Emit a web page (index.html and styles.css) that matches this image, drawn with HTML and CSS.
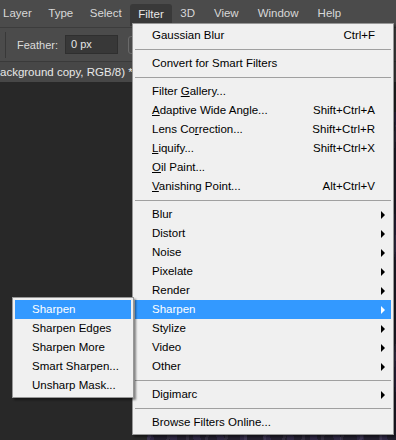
FILE: index.html
```html
<!DOCTYPE html>
<html lang="en">

<head>
  <meta charset="UTF-8">
  <meta name="viewport" content="width=device-width, initial-scale=1.0">
  <title>Filter Menu</title>
  <link rel="stylesheet" href="styles.css">
</head>

<body>
  <div class="app">
    <div class="menubar">
      <div class="menubar-item first">Layer</div>
      <div class="menubar-item">Type</div>
      <div class="menubar-item">Select</div>
      <div class="menubar-item active">Filter</div>
      <div class="menubar-item">3D</div>
      <div class="menubar-item spaced">View</div>
      <div class="menubar-item spaced">Window</div>
      <div class="menubar-item spaced">Help</div>
    </div>

    <div class="options-bar">
      <div class="divider"></div>
      <span class="option-label">Feather:</span>
      <div class="option-input">0 px</div>
      <div class="option-check"></div>
    </div>

    <div class="tab-row">
      <span class="tab-title">ackground copy, RGB/8) *</span>
    </div>

    <div class="workspace">
      <div class="document"></div>
    </div>

    <div class="dropdown">
      <div class="menu-item"><span class="label">Gaussian Blur</span><span class="shortcut">Ctrl+F</span><span class="arrow-col"></span></div>
      <div class="separator"></div>
      <div class="menu-item"><span class="label">Convert for Smart Filters</span><span class="arrow-col"></span></div>
      <div class="separator"></div>
      <div class="menu-item"><span class="label">Filter <u>G</u>allery...</span><span class="arrow-col"></span></div>
      <div class="menu-item"><span class="label"><u>A</u>daptive Wide Angle...</span><span class="shortcut">Shift+Ctrl+A</span><span class="arrow-col"></span></div>
      <div class="menu-item"><span class="label">Lens Co<u>r</u>rection...</span><span class="shortcut">Shift+Ctrl+R</span><span class="arrow-col"></span></div>
      <div class="menu-item"><span class="label"><u>L</u>iquify...</span><span class="shortcut">Shift+Ctrl+X</span><span class="arrow-col"></span></div>
      <div class="menu-item"><span class="label"><u>O</u>il Paint...</span><span class="arrow-col"></span></div>
      <div class="menu-item"><span class="label"><u>V</u>anishing Point...</span><span class="shortcut">Alt+Ctrl+V</span><span class="arrow-col"></span></div>
      <div class="separator"></div>
      <div class="menu-item"><span class="label">Blur</span><span class="arrow-col"><i class="arrow"></i></span></div>
      <div class="menu-item"><span class="label">Distort</span><span class="arrow-col"><i class="arrow"></i></span></div>
      <div class="menu-item"><span class="label">Noise</span><span class="arrow-col"><i class="arrow"></i></span></div>
      <div class="menu-item"><span class="label">Pixelate</span><span class="arrow-col"><i class="arrow"></i></span></div>
      <div class="menu-item"><span class="label">Render</span><span class="arrow-col"><i class="arrow"></i></span></div>
      <div class="menu-item selected"><span class="label">Sharpen</span><span class="arrow-col"><i class="arrow"></i></span></div>
      <div class="menu-item"><span class="label">Stylize</span><span class="arrow-col"><i class="arrow"></i></span></div>
      <div class="menu-item"><span class="label">Video</span><span class="arrow-col"><i class="arrow"></i></span></div>
      <div class="menu-item"><span class="label">Other</span><span class="arrow-col"><i class="arrow"></i></span></div>
      <div class="separator"></div>
      <div class="menu-item"><span class="label">Digimarc</span><span class="arrow-col"><i class="arrow"></i></span></div>
      <div class="separator"></div>
      <div class="menu-item"><span class="label">Browse Filters Online...</span><span class="arrow-col"></span></div>
    </div>

    <div class="submenu">
      <div class="menu-item selected"><span class="label">Sharpen</span></div>
      <div class="menu-item"><span class="label">Sharpen Edges</span></div>
      <div class="menu-item"><span class="label">Sharpen More</span></div>
      <div class="menu-item"><span class="label">Smart Sharpen...</span></div>
      <div class="menu-item"><span class="label">Unsharp Mask...</span></div>
    </div>
  </div>
</body>

</html>
```

FILE: styles.css
```css
body {
  margin: 0;
  padding: 0;
  background-color: #282828;
  font-family: "Liberation Sans", Arial, sans-serif;
}

.app {
  position: relative;
  width: 396px;
  height: 440px;
  overflow: hidden;
  display: flex;
  flex-direction: column;
}

/* top application menu */
.menubar {
  height: 27px;
  background-color: #4b4b4b;
  border-bottom: 1px solid #3c3c3c;
  display: flex;
  align-items: center;
  font-size: 11.5px;
  color: #d8d8d8;
}

.menubar-item {
  height: 19px;
  line-height: 19px;
  padding: 0 8px;
  margin-right: 0.5px;
  border-radius: 2px;
}

.menubar-item.first {
  margin-left: -5px;
}

.menubar-item.spaced {
  margin-left: 2.5px;
}

.menubar-item.active {
  background-color: #393939;
  color: #e8e8e8;
  height: 22px;
  line-height: 20px;
  margin-top: 3px;
  border-radius: 3px 3px 0 0;
}

/* tool options */
.options-bar {
  height: 33px;
  background-color: #4b4b4b;
  border-bottom: 1px solid #3a3a3a;
  display: flex;
  align-items: center;
  font-size: 11px;
  color: #dcdcdc;
}

.divider {
  width: 1px;
  height: 26px;
  margin-left: 5px;
  background-color: #383838;
}

.option-label {
  margin-left: 11px;
}

.option-input {
  width: 46px;
  height: 17px;
  line-height: 17px;
  margin-left: 7px;
  padding-left: 5px;
  background-color: #383838;
  border: 1px solid #2f2f2f;
  color: #e6e6e6;
}

.option-check {
  width: 14px;
  height: 16px;
  margin-left: 10px;
  border: 1px solid #6a6a6a;
  border-radius: 3px;
}

/* document tab */
.tab-row {
  height: 20px;
  background-color: #474747;
  display: flex;
  align-items: center;
  font-size: 11.5px;
  color: #e8e8e8;
  white-space: nowrap;
}

.tab-title {
  margin-left: 0;
}

.workspace {
  flex: 1;
  display: flex;
  background-color: #282828;
}

.document {
  flex: 1;
  margin: 30px 0 0 147px;
  background-color: #231f2e;
  background-image:
    repeating-linear-gradient(100deg, rgba(150, 140, 170, 0.14) 0 3px, transparent 3px 19px),
    repeating-linear-gradient(80deg, rgba(60, 50, 90, 0.5) 0 7px, transparent 7px 23px);
}

/* filter dropdown */
.dropdown,
.submenu {
  position: absolute;
  background-color: #f0f0f0;
  border: 1px solid #979797;
  padding: 2px;
  box-shadow: 2px 2px 2px rgba(0, 0, 0, 0.45);
  font-size: 11.5px;
  color: #000;
}

.dropdown {
  left: 132px;
  top: 23px;
  width: 256px;
}

.submenu {
  left: 12px;
  top: 297px;
  width: 116px;
  z-index: 2;
}

.menu-item {
  height: 19px;
  line-height: 19px;
  display: flex;
  align-items: center;
  padding-left: 17px;
  white-space: nowrap;
}

.menu-item .label {
  flex: 1;
}

.menu-item u {
  text-underline-offset: 1px;
}

.menu-item.selected {
  background-color: #3399ff;
  color: #fff;
}

.shortcut {
  margin-right: 2px;
}

.arrow-col {
  width: 14px;
  display: flex;
  align-items: center;
}

.arrow {
  width: 0;
  height: 0;
  margin-left: 4px;
  border-left: 4px solid #000;
  border-top: 4px solid transparent;
  border-bottom: 4px solid transparent;
}

.selected .arrow {
  border-left-color: #fff;
}

.separator {
  height: 9px;
  position: relative;
}

.separator::after {
  content: "";
  position: absolute;
  left: 0;
  right: 0;
  top: 4px;
  border-top: 1px solid #a0a0a0;
}
```
